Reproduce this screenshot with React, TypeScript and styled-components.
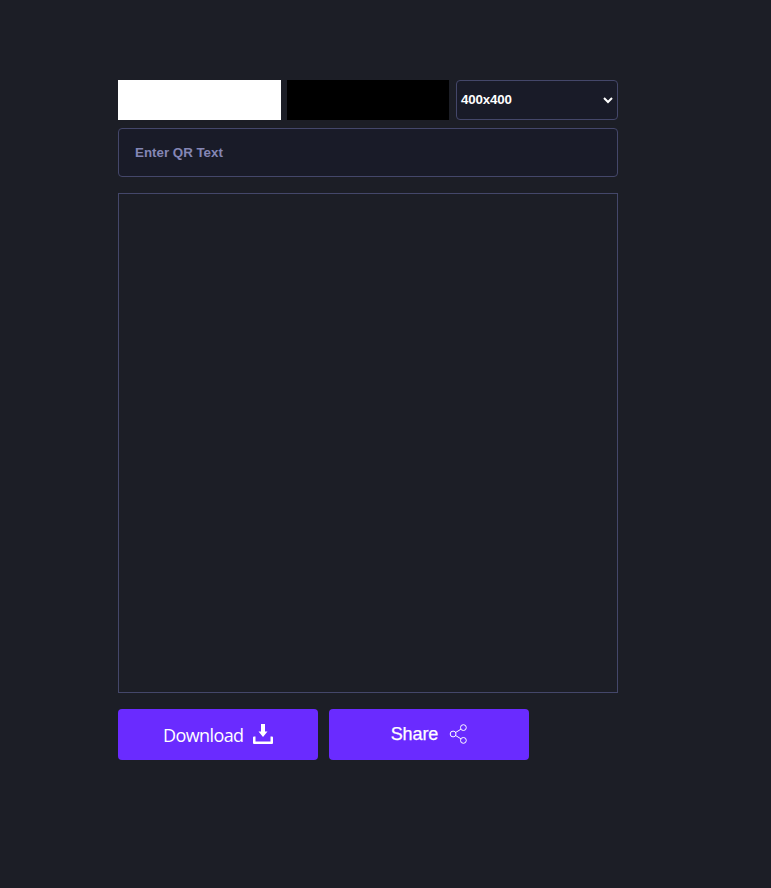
import React, { useState } from "react";
import styled, { createGlobalStyle } from "styled-components";

const GlobalStyle = createGlobalStyle`
  * { box-sizing: border-box; }
  body { margin: 0; background: #1c1e26; font-family: "Liberation Sans", Arial, sans-serif; }
`;

const Page = styled.main`
  width: 500px;
  margin: 80px 0 0 118px;
`;

const Controls = styled.div`
  display: grid;
  grid-template-columns: 163px 162px 162px;
  column-gap: 6px;
  height: 40px;
`;

const Swatch = styled.div<{ $color: string }>`
  height: 40px;
  background: ${(p) => p.$color};
`;

const SizeField = styled.button`
  width: 162px;
  height: 40px;
  margin-left: 1px;
  display: flex;
  align-items: center;
  justify-content: space-between;
  padding: 0 4px 2px;
  border: 1px solid #44476a;
  border-radius: 4px;
  background: #191b28;
  color: #fff;
  font: bold 13.333px "Liberation Sans", Arial, sans-serif;
  letter-spacing: -0.15px;
  svg { margin-top: 3px; }
`;

const TextField = styled.input`
  display: block;
  width: 100%;
  height: 49px;
  margin-top: 8px;
  padding: 0 16px;
  border: 1px solid #44476a;
  border-radius: 4px;
  background: #191b28;
  color: #fff;
  font: bold 13.333px "Liberation Sans", Arial, sans-serif;
  outline: none;
  &::placeholder { color: #8486b5; opacity: 1; }
`;

const Preview = styled.section`
  height: 500px;
  margin-top: 16px;
  border: 1px solid #44476a;
`;

const Actions = styled.div`
  display: flex;
  gap: 11px;
  margin-top: 16px;
`;

const Action = styled.button`
  width: 200px;
  height: 51px;
  display: flex;
  align-items: center;
  justify-content: center;
  padding: 0 0 1px;
  border: 0;
  border-radius: 4px;
  background: #6a2bff;
  color: #fff;
  font: 18px "Liberation Sans", Arial, sans-serif;
`;

const DownloadLabel = styled.span`
  width: 81px;
  margin-right: 9px;
  padding-top: 1px;
  text-align: left;
  font: 18px "Open Sans", sans-serif;
  letter-spacing: -0.6px;
  white-space: nowrap;
`;

const ShareLabel = styled.span`
  margin-right: 11px;
  letter-spacing: -0.1px;
  -webkit-text-stroke: 0.25px #fff;
`;

export default function App() {
  const [text, setText] = useState("");
  return (
    <>
      <GlobalStyle />
      <Page>
        <Controls>
          <Swatch $color="#fff" />
          <Swatch $color="#000" />
          <SizeField>
            400x400
            <svg width="10" height="7" viewBox="0 0 10 7" fill="none" stroke="#fff" strokeWidth="2">
              <path d="M1 1l4 4 4-4" />
            </svg>
          </SizeField>
        </Controls>
        <TextField placeholder="Enter QR Text" value={text} onChange={(e) => setText(e.target.value)} />
        <Preview />
        <Actions>
          <Action>
            <DownloadLabel>Download</DownloadLabel>
            <svg width="20" height="20" viewBox="0 0 20 20" fill="#fff">
              <path d="M8 0h4v7.5h2.5L10 13 5.5 7.5H8z" />
              <path d="M1 12.5h1.5v5h15v-5H19a1 1 0 0 1 1 1V19a1 1 0 0 1-1 1H1a1 1 0 0 1-1-1v-5.500a1 1 0 0 1 1-1z" />
            </svg>
          </Action>
          <Action>
            <ShareLabel>Share</ShareLabel>
            <svg width="18" height="20" viewBox="0 0 18 20" fill="none" stroke="#fff" strokeWidth="1">
              <circle cx="4.1" cy="10" r="2.9" />
              <circle cx="14.4" cy="3.6" r="2.9" />
              <circle cx="14.4" cy="16.4" r="2.9" />
              <path d="M6.600 8.500l5.300-3.300M6.600 11.500l5.300 3.300" />
            </svg>
          </Action>
        </Actions>
      </Page>
    </>
  );
}
